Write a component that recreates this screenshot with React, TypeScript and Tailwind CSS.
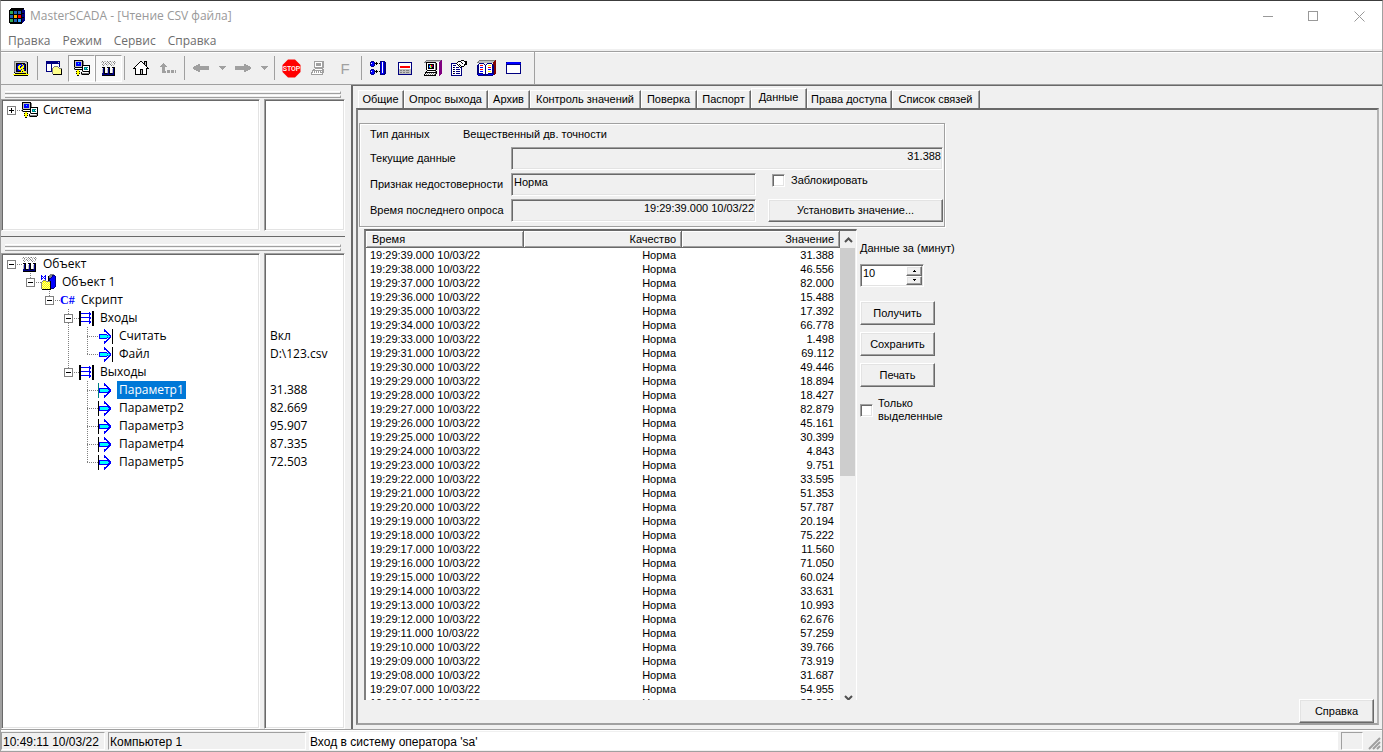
import React, { useState } from "react";

const PALETTE: Record<string, string> = {
  k: "#000000", n: "#000080", b: "#0000ff", g: "#808080", s: "#c0c0c0", w: "#ffffff",
  y: "#ffff00", l: "#ffff8c", c: "#00ffff", t: "#008080", r: "#ff0000", G: "#2fa84f",
  p: "#800080", m: "#800000", a: "#a0a0a0", u: "#1f5fb4", o: "#ffb000", h: "#2aa0ff",
};

function Pix({ rows, w = 16 }: { rows: string[]; w?: number }) {
  const rects: React.ReactNode[] = [];
  rows.forEach((row, y) => {
    let x = 0;
    while (x < row.length) {
      let end = x + 1;
      while (end < row.length && row[end] === row[x]) end++;
      if (PALETTE[row[x]]) {
        rects.push(<rect key={y + "-" + x} x={x} y={y} width={end - x} height={1} fill={PALETTE[row[x]]} />);
      }
      x = end;
    }
  });
  return (
    <svg width={w} height={rows.length} viewBox={`0 0 ${w} ${rows.length}`} shapeRendering="crispEdges" aria-hidden="true" className="block shrink-0">
      {rects}
    </svg>
  );
}

const LOGO = [
  "..kkkkkkkkkkkkk.",
  ".kkkkkkkkkkkkkn.",
  "kkkkkkkkkkkkknnn",
  "kGGGkuuukuuuknnn",
  "kGGGkuuukuuuknnn",
  "kGGGkuuukuuukkkn",
  "kkkkkkkkkkkkknnn",
  "kuuukoookrrrknnn",
  "kuuukoookrrrknnn",
  "kuuukoookrrrkkkn",
  "kkkkkkkkkkkkknnn",
  "kGGGkuuukhhhknnn",
  "kGGGkuuukhhhknnn",
  "kGGGkuuukhhhknn.",
  "kkkkkkkkkkkkkn..",
  ".kkkkkkkkkkkk...",
];

const EXIT = [
  ".ggggggggggggg..",
  ".gsssssssssssgk.",
  ".gskkkkkkkkkssk.",
  ".gsknbbbbynnksk.",
  ".gsknbyybbynksk.",
  ".gskbyynbyynksk.",
  ".gskbyynyyynksk.",
  ".gsknyyyyynnksk.",
  ".gsknbyybyybksk.",
  ".gsknbbbyyynksk.",
  ".gskkkkkykyyssk.",
  ".kssssyyyssyysk.",
  "..kkkkkkkkkkkyk.",
  "yyyyyyyyyyyyyyyy",
  ".kkkkkkkkkkkkkk.",
];

const FOLDER_WIN = [
  "nnnnnnnnnnnnnn..",
  "nnnnnnnnnnnnsn..",
  "nnnnnnnnnnnnnn..",
  "nwwwwnwwwwwwwn..",
  "nwwwwnwwwwwwwn..",
  "nwwwwnwwggggwn..",
  "nwwwwnwgllllg...",
  "nwwwwngllllllggg",
  "nwwwwngllllllllk",
  "nwwwwngllllllllk",
  "nnnnnngllllllllk",
  "......gllllllllk",
  "......gllllllllk",
  ".......kkkkkkkkk",
];

const SYSTEM = [
  "kkkkkkkkk.......",
  "kssssssskg......",
  "ksbbbbbskg......",
  "ksbbcbbskg......",
  "ksbbbbbskg......",
  "ksbbbbbskkkkkkkk",
  "kssssssskwwwwwwk",
  "gkkkkkkkkwttttwk",
  "kwwwwwwwkwtctwwk",
  "gkkkkkkkkwttttwk",
  "...yy...kwwwwwwk",
  "..kyyk..gkkkkkkk",
  "..yyyy.kwwwwwwsk",
  "..kyyk.kgggggggk",
  "...yy..gkkkkkkk.",
  "...kk...........",
];

const FACTORY = [
  ".g.ss.g.sg.s.g..",
  "s.g..s.g..s.g.s.",
  "..s.g.s.g.s..g..",
  ".g.s.g.s.g.s.s..",
  "..g...s...g.s...",
  "................",
  ".kkk..kkk..kkk..",
  "..nk...nk...nk..",
  ".snk..snk..snk..",
  ".snk..snk..snk..",
  ".snk..snk..snk..",
  ".snk..snk..snk..",
  ".nnkkknnkkknnk..",
  ".nnnnnnnnnnnnk..",
  ".kkkkkkkkkkkkk..",
];

const HOME = [
  ".......kk..kkk..",
  "......kwwk.ksk..",
  ".....kwwwwkksk..",
  "....kwwwwwwksk..",
  "...kwwwwwwwwkk..",
  "..kwwwwwwwwwwk..",
  ".kwwwwwwwwwwwwk.",
  "kkkwwwwwwwwwwkkk",
  "..kwwwwkkkwwwk..",
  "..kwwwwkskwwwk..",
  "..kwwwwkskwwwk..",
  "..kwwwwkskwwwk..",
  "..kwwwwkskwwwk..",
  "..kkkkkkkkkkkk..",
];

const UP = [
  "...a............",
  "..aaa...........",
  ".aaaaa..........",
  "aaaaaaa.........",
  "..aaa...........",
  "..aaa...........",
  "..aaa...........",
  "..aaa..aaa.aaa.a",
  "..aaaa.aaa.aaa.a",
  "..aaaa.aaa.aaa.a",
];

const LEFT = [
  ".....aa.........",
  "...aaaa.........",
  ".aaaaaaaaaaaaaaa",
  "aaaaaaaaaaaaaaaa",
  "aaaaaaaaaaaaaaaa",
  ".aaaaaaaaaaaaaaa",
  "...aaaa.........",
  ".....aa.........",
];
const RIGHT = LEFT.map((r) => r.split("").reverse().join(""));
const CARET = ["aaaaaaa", ".aaaaa.", "..aaa..", "...a..."];

const PC_GRAY = [
  "....aaaaaaaaaa..",
  "....awwwwwwwaa..",
  "....awaaaaawaa..",
  "....awaaaaawaa..",
  "....awaaaaawaa..",
  "....awwwwwwwaa..",
  "....aaaaaaaaaa..",
  ".....aaaaaaaa...",
  "...aawwwwwwwaa..",
  "..aaaaaaaaaaaa..",
  "..awawawawawaa..",
  ".aawawawawaaaa..",
  ".awwwwwwwwwwa...",
  ".aaaaaaaaaaaa...",
];

const LINKS = [
  ".nnn......nnnnn.",
  "nbbbn.k...nbwbnn",
  "nwbbnkkk.knbwbnn",
  "nbbbn.k...nbwbnn",
  "nbbbn.....nbwbnn",
  ".nnn......nbwbnn",
  "..........nbwbnn",
  "..........nbwbnn",
  ".nnn......nbwbnn",
  "nbbbn.k...nbwbnn",
  "nwbbnkkk.knbwbnn",
  "nbbbn.k...nbwbnn",
  "nbbbn.....nbbbnn",
  ".nnn......nnnnn.",
];

const DIALOG = [
  "nnnnnnnnnnnnnn",
  "nwwwwwwwwwwwwn",
  "nwwwwwwwwwwwwn",
  "nwwwwwwwwwwwwn",
  "nwrrrrrrrrrrwn",
  "nwrrrrrrrrrrwn",
  "nwwwwwwwwwwwwn",
  "nssssssssssssn",
  "nsggsggsgggssn",
  "nssssssssssssn",
  "nsggsggsgggssn",
  "nssssssssssssn",
  "nnnnnnnnnnnnnn",
];

const PC_COLOR = [
  "...gggggggggggggggp",
  "..gsssssssssssssspp",
  ".ggkkkkkkkkkk.wwppp",
  "...kwwwwwwwwgk.wppp",
  "...kwkkkkkkwgk.wppp",
  "...kwkbyrpkwgk.wppp",
  "...kwkccrpkwgk.wppp",
  "...kwkbyGkkwgk.wppp",
  "...kwkkkkkkwgk.wppp",
  "...kwwwwwwwwgk.wppp",
  "....kkkkkkkkk..wppp",
  "...kwwwwwwwwgk.wppp",
  "..kkkkkkkkkkkk.wppp",
  "..kwgwgwgwgwgk.wppp",
  ".kwgwgwgwgwgk..wpp.",
  ".kkkkkkkkkkkk..wp..",
];

const PROPS = [
  "..........kkk...",
  ".......kkkwwwkkk",
  "......kwwwkwwwkk",
  "nnnnnkwwwwwkwwkk",
  "nwwwwwkwkwwwwkkk",
  "nwnnnwwkwkwwwk..",
  "nwwwwwwwkwkkk...",
  "nwknwnnnwkn.....",
  "nwwwwwwwwwn.....",
  "nwknwnnnnwn.....",
  "nwwwwwwwwwn.....",
  "nwknwnnnnwn.....",
  "nwwwwwwwwwn.....",
  "nwknwnnnnwn.....",
  "nwwwwwwwwwn.....",
  "nnnnnnnnnnn.....",
];

const BOOK = [
  "..ggggggggggggggggm",
  ".gsssssssssssssssmm",
  "ggssssssssssssssmmm",
  "..nnnnn...nnnnn.mmm",
  ".nwwwwwn.nwwwwwnmmm",
  "nnwrrrwwnwwyyywnnmm",
  "nnwwwwwwnwwwwwwnnmm",
  "nnwbbbwwnwwrrrwnnmm",
  "nnwwwwwwnwwwwwwnnmm",
  "nnwrrrwwnwwbbbwnnmm",
  "nnwwwwwwnwwwwwwnnmm",
  "nnwbbbwwnwwyyywnnmm",
  "nnwwwwwwnwwwwwwnnmm",
  "nnnnnnwwnwwnnnnnnmm",
  "nbbbbbnnnnnbbbbbnm.",
  ".nnnnnnnnnnnnnnn...",
];

const WINDOW = [
  "nbbbbbbbbbbbbbn",
  "bbbbbbbbbbbbbbb",
  "nnnnnnnnnnnnnnn",
  "nwwwwwwwwwwwwwn",
  "nwwwwwwwwwwwwwn",
  "nwwwwwwwwwwwwwn",
  "nwwwwwwwwwwwwwn",
  "nwwwwwwwwwwwwwn",
  "nwwwwwwwwwwwwwn",
  "nwwwwwwwwwwwwwn",
  "nwwwwwwwwwwwwwn",
  "nnnnnnnnnnnnnnn",
];

const OBJECT = [
  ".........gggg...",
  "b...b...gggnnn..",
  "bb.bb..kgggnbbn.",
  "b.b.b..kggnbbbn.",
  "bb.bb..knnbbbbn.",
  "b...b..knbbbbbn.",
  "..ggg..knbbbbbn.",
  ".gyyyggggkbbbbn.",
  "glylylylykbbbbn.",
  "gylylylylkbbbbn.",
  "glylylylykbbbbn.",
  "gylylylylkbbbbn.",
  "glylylylykbbbbn.",
  "gylylylylkbbbn..",
  "glylylylyknnn...",
  ".kkkkkkkkk......",
];

const PORTS = [
  "kk...........kk.",
  "kk........b..kk.",
  "kkbbbbbbbbbb.kk.",
  "kk........bb.kk.",
  "kk........b..kk.",
  "kk........b..kk.",
  "kkbbbbbbbbbb.kk.",
  "kk........bb.kk.",
  "kk........b..kk.",
  "kk........b..kk.",
  "kkbbbbbbbbbb.kk.",
  "kk........bb.kk.",
  "kk........b..kk.",
  "kk...........kk.",
  "kk...........kk.",
];

const INPUT = [
  "......b.......k.",
  "......bb......k.",
  "......bbb.....k.",
  "........bb....k.",
  ".........bb...k.",
  ".bbbbbbbb.bb..k.",
  ".bcccccccbcbb.k.",
  ".bccccccccccb.k.",
  ".bcccccccbcbb.k.",
  ".bbbbbbbb.bb..k.",
  ".........bb...k.",
  "........bb....k.",
  "......bbb.....k.",
  "......bb......k.",
  "......b.......k.",
];

const OUTPUT = [
  "k.....b.........",
  "k.....bb........",
  "k.....bbb.......",
  "k.......bb......",
  "k........bb.....",
  "kbbbbbbbbbbb....",
  "kbccccccccbbb...",
  "kbcccccccccbb...",
  "kbccccccccbbb...",
  "kbbbbbbbbbbb....",
  "k........bb.....",
  "k.......bb......",
  "k.....bbb.......",
  "k.....bb........",
  "k.....b.........",
];
const OUTPUT_ACTIVE = OUTPUT.map((r) => "t" + r.slice(1));

type Cell = "blank" | "vert" | "tee" | "end" | "plus" | "minus" | "minusUp" | "minusUpDown";

function Guide({ kind }: { kind: Cell }) {
  const box = kind === "plus" || kind.startsWith("minus");
  const up = kind === "vert" || kind === "tee" || kind === "end" || kind === "minusUp" || kind === "minusUpDown";
  const down = kind === "vert" || kind === "tee" || kind === "minusUpDown";
  return (
    <svg width="19" height="18" viewBox="0 0 19 18" shapeRendering="crispEdges" className="block" aria-hidden="true">
      <g stroke="#808080" strokeWidth="1" strokeDasharray="1 1" fill="none">
        {up && <path d="M8.5 0V9" />}
        {down && <path d="M8.5 10V18" />}
        {kind !== "blank" && kind !== "vert" && <path d="M8 9.5H19" />}
      </g>
      {box && (
        <g fill="none" stroke="#808080">
          <rect x="4.5" y="5.5" width="8" height="8" fill="#ffffff" />
          <path d="M6 9.5H11" stroke="#000000" />
          {kind === "plus" && <path d="M8.5 7V12" stroke="#000000" />}
        </g>
      )}
    </svg>
  );
}

type Node = { cells: Cell[]; icon: React.ReactNode; label: string; value?: string };

const CSHARP = (
  <span className="w-4 font-['Liberation_Serif',serif] text-[12px] font-bold leading-none text-[#0000ff]">C#</span>
);

const OBJECTS: Node[] = [
  { cells: ["minus"], icon: <Pix rows={FACTORY} />, label: "Объект" },
  { cells: ["blank", "minusUp"], icon: <Pix rows={OBJECT} />, label: "Объект 1" },
  { cells: ["blank", "blank", "minusUp"], icon: CSHARP, label: "Скрипт" },
  { cells: ["blank", "blank", "blank", "minusUpDown"], icon: <Pix rows={PORTS} />, label: "Входы" },
  { cells: ["blank", "blank", "blank", "vert", "tee"], icon: <Pix rows={INPUT} />, label: "Считать", value: "Вкл" },
  { cells: ["blank", "blank", "blank", "vert", "end"], icon: <Pix rows={INPUT} />, label: "Файл", value: "D:\\123.csv" },
  { cells: ["blank", "blank", "blank", "minusUp"], icon: <Pix rows={PORTS} />, label: "Выходы" },
  { cells: ["blank", "blank", "blank", "blank", "tee"], icon: <Pix rows={OUTPUT_ACTIVE} />, label: "Параметр1", value: "31.388" },
  { cells: ["blank", "blank", "blank", "blank", "tee"], icon: <Pix rows={OUTPUT} />, label: "Параметр2", value: "82.669" },
  { cells: ["blank", "blank", "blank", "blank", "tee"], icon: <Pix rows={OUTPUT} />, label: "Параметр3", value: "95.907" },
  { cells: ["blank", "blank", "blank", "blank", "tee"], icon: <Pix rows={OUTPUT} />, label: "Параметр4", value: "87.335" },
  { cells: ["blank", "blank", "blank", "blank", "end"], icon: <Pix rows={OUTPUT} />, label: "Параметр5", value: "72.503" },
];

const SYSTEMS: Node[] = [{ cells: ["plus"], icon: <Pix rows={SYSTEM} />, label: "Система" }];

const SUNKEN =
  "border border-t-[#a0a0a0] border-l-[#a0a0a0] border-r-white border-b-white shadow-[inset_1px_1px_0_#696969,inset_-1px_-1px_0_#e3e3e3]";
const RAISED =
  "border border-t-white border-l-white border-r-[#696969] border-b-[#696969] shadow-[inset_-1px_-1px_0_#a0a0a0,inset_1px_1px_0_#e3e3e3] bg-[#f0f0f0]";

function Grip() {
  return (
    <div className="mx-1 flex flex-col gap-px">
      <div className="h-[3px] border-t border-r border-b border-t-white border-r-[#a0a0a0] border-b-[#a0a0a0]" />
      <div className="h-[3px] border-t border-r border-b border-t-white border-r-[#a0a0a0] border-b-[#a0a0a0]" />
    </div>
  );
}

function TreePane({ nodes, selected, onSelect }: { nodes: Node[]; selected: string; onSelect: (s: string) => void }) {
  return (
    <div className="flex min-h-0 flex-1 gap-1 font-['Open_Sans','Noto_Sans',sans-serif] text-[12px] leading-[18px]">
      <ul className={`w-[259px] overflow-hidden bg-white p-px ${SUNKEN}`}>
        {nodes.map((n) => (
          <li key={n.label} className="flex h-[18px] items-center">
            {n.cells.map((c, i) =>
              c === "plus" || c.startsWith("minus") ? (
                <button key={i} type="button" aria-label={n.label}><Guide kind={c} /></button>
              ) : (
                <Guide key={i} kind={c} />
              )
            )}
            {n.icon}
            <button
              type="button"
              onClick={() => onSelect(n.label)}
              className={`ml-[3px] px-[2px] ${selected === n.label ? "bg-[#0078d7] text-white" : "text-black"}`}
            >
              {n.label}
            </button>
          </li>
        ))}
      </ul>
      <ul className={`flex-1 overflow-hidden bg-white py-px pl-[5px] ${SUNKEN}`}>
        {nodes.map((n) => (
          <li key={n.label} className="h-[18px]">{n.value}</li>
        ))}
      </ul>
    </div>
  );
}

function ToolButton({ label, pressed, disabled, children }: { label: string; pressed?: boolean; disabled?: boolean; children: React.ReactNode }) {
  return (
    <button
      type="button"
      aria-label={label}
      disabled={disabled}
      className={`flex h-[27px] w-[27px] items-center justify-center border ${
        pressed ? "border-t-[#a0a0a0] border-l-[#a0a0a0] border-r-white border-b-white bg-[#f8f8f8]" : "border-transparent pr-px"
      }`}
    >
      {children}
    </button>
  );
}

function Sep() {
  return <span className="mr-[3px] ml-[2px] h-[24px] w-px bg-[#a0a0a0]" />;
}

const DATA: [string, string][] = [
  ["39", "31.388"], ["38", "46.556"], ["37", "82.000"], ["36", "15.488"], ["35", "17.392"], ["34", "66.778"],
  ["33", "1.498"], ["31", "69.112"], ["30", "49.446"], ["29", "18.894"], ["28", "18.427"], ["27", "82.879"],
  ["26", "45.161"], ["25", "30.399"], ["24", "4.843"], ["23", "9.751"], ["22", "33.595"], ["21", "51.353"],
  ["20", "57.787"], ["19", "20.194"], ["18", "75.222"], ["17", "11.560"], ["16", "71.050"], ["15", "60.024"],
  ["14", "33.631"], ["13", "10.993"], ["12", "62.676"], ["11", "57.259"], ["10", "39.766"], ["09", "73.919"],
  ["08", "31.687"], ["07", "54.955"], ["06", "35.234"],
];

const TABS: [string, string][] = [
  ["Общие", "w-[46px]"], ["Опрос выхода", "w-[84px]"], ["Архив", "w-[42px]"], ["Контроль значений", "w-[111px]"],
  ["Поверка", "w-[56px]"], ["Паспорт", "w-[54px]"], ["Данные", "w-[56px]"], ["Права доступа", "w-[85px]"], ["Список связей", "w-[88px]"],
];

const CHECK =
  "size-[13px] shrink-0 appearance-none border border-t-[#a0a0a0] border-l-[#a0a0a0] border-r-white border-b-white bg-white shadow-[inset_1px_1px_0_#696969,inset_-1px_-1px_0_#e3e3e3] checked:bg-[#0078d7]";
const FIELD = `h-[23px] bg-[#f0f0f0] pl-[2px] pr-px pb-[6px] outline-none ${SUNKEN}`;
const TH = "border-r border-b border-[#696969] shadow-[inset_1px_1px_0_#ffffff,inset_-1px_-1px_0_#a0a0a0] font-normal";

export default function App() {
  const [selected, setSelected] = useState("Параметр1");
  const [tab, setTab] = useState("Данные");
  const [minutes, setMinutes] = useState(10);

  return (
    <div className="flex h-screen flex-col overflow-hidden border-t border-r border-b border-l border-t-[#3c3c3c] border-r-[#a0a0a0] border-b-[#a0a0a0] border-l-[#a0a0a0] bg-[#f0f0f0] font-['Liberation_Sans',sans-serif] text-[11px] text-black">
      <header className="shrink-0 bg-white font-['Open_Sans','Noto_Sans',sans-serif] text-[12px]">
        <div className="flex h-[30px] items-center pl-2">
          <Pix rows={LOGO} />
          <h1 className="ml-[5px] text-[#999999]">MasterSCADA - [Чтение CSV файла]</h1>
          <div className="ml-auto flex h-full text-[#999999]">
            <button type="button" aria-label="Свернуть" className="flex w-[45px] items-center justify-center">
              <svg width="11" height="11" viewBox="0 0 11 11" stroke="currentColor" shapeRendering="crispEdges"><path d="M0 5.5H10" /></svg>
            </button>
            <button type="button" aria-label="Развернуть" className="flex w-[45px] items-center justify-center">
              <svg width="11" height="11" viewBox="0 0 11 11" stroke="currentColor" fill="none" shapeRendering="crispEdges"><rect x="0.5" y="0.5" width="9" height="9" /></svg>
            </button>
            <button type="button" aria-label="Закрыть" className="flex w-[46px] items-center justify-center">
              <svg width="11" height="11" viewBox="0 0 11 11" stroke="currentColor"><path d="M0.5 0.5L10.5 10.5M10.5 0.5L0.5 10.5" /></svg>
            </button>
          </div>
        </div>
        <nav className="flex h-[18px] items-center gap-3 pt-[2px] pl-[7px] text-[#6d6d6d]">
          {["Правка", "Режим", "Сервис", "Справка"].map((m) => (
            <button key={m} type="button">{m}</button>
          ))}
        </nav>
      </header>

      <div className="mt-[2px] flex h-[34px] shrink-0 items-center border-t border-b border-[#a0a0a0] pl-[7px] shadow-[inset_0_1px_0_#ffffff]">
        <ToolButton label="Выход"><Pix rows={EXIT} /></ToolButton>
        <Sep />
        <ToolButton label="Окно проекта"><Pix rows={FOLDER_WIN} /></ToolButton>
        <ToolButton label="Система" pressed><Pix rows={SYSTEM} /></ToolButton>
        <ToolButton label="Объекты" pressed><Pix rows={FACTORY} /></ToolButton>
        <Sep />
        <ToolButton label="Домой"><Pix rows={HOME} /></ToolButton>
        <ToolButton label="Вверх" disabled><Pix rows={UP} /></ToolButton>
        <Sep />
        <ToolButton label="Назад" disabled><Pix rows={LEFT} /></ToolButton>
        <button type="button" aria-label="История назад" disabled className="flex w-[15px] justify-center"><Pix rows={CARET} w={7} /></button>
        <ToolButton label="Вперёд" disabled><Pix rows={RIGHT} /></ToolButton>
        <button type="button" aria-label="История вперёд" disabled className="flex w-[15px] justify-center"><Pix rows={CARET} w={7} /></button>
        <Sep />
        <ToolButton label="Стоп">
          <svg width="19" height="19" viewBox="0 0 19 19" className="shrink-0">
            <path d="M6 0.5H13L18.5 6V13L13 18.5H6L0.5 13V6Z" fill="#ff0000" />
            <text x="9.5" y="12" textAnchor="middle" fontFamily="Roboto, sans-serif" fontSize="7" fontWeight="500" fill="#ffffff">STOP</text>
          </svg>
        </ToolButton>
        <ToolButton label="Компьютер" disabled><Pix rows={PC_GRAY} /></ToolButton>
        <ToolButton label="Фиксация" disabled><span className="text-[15px] leading-none text-[#a0a0a0]">F</span></ToolButton>
        <Sep />
        <ToolButton label="Связи"><Pix rows={LINKS} /></ToolButton>
        <ToolButton label="Диалог"><Pix rows={DIALOG} w={14} /></ToolButton>
        <ToolButton label="Мнемосхема"><Pix rows={PC_COLOR} w={19} /></ToolButton>
        <ToolButton label="Свойства"><Pix rows={PROPS} /></ToolButton>
        <ToolButton label="Журнал"><Pix rows={BOOK} w={19} /></ToolButton>
        <ToolButton label="Окно"><Pix rows={WINDOW} w={15} /></ToolButton>
        <span className="ml-[7px] h-full w-px bg-[#a0a0a0]" />
      </div>

      <div className="flex min-h-0 flex-1 border-b border-[#a0a0a0]">
        <aside className="flex w-[344px] shrink-0 flex-col">
          <div className="flex h-[152px] shrink-0 flex-col border-b border-[#696969] pt-[6px] pb-[5px]">
            <Grip />
            <div className="h-px" />
            <TreePane nodes={SYSTEMS} selected={selected} onSelect={setSelected} />
          </div>
          <div className="flex min-h-0 flex-1 flex-col pt-[7px]">
            <Grip />
            <div className="h-[2px]" />
            <TreePane nodes={OBJECTS} selected={selected} onSelect={setSelected} />
          </div>
        </aside>

        <main className="ml-[6px] flex min-w-0 flex-1 flex-col border-t border-l-2 border-[#696969] pt-[2px] pr-[3px] pb-[4px] pl-[3px]">
          <div role="tablist" className="flex h-[20px] shrink-0 items-end pl-[2px]">
            {TABS.map(([name, width]) => (
              <button
                key={name}
                type="button"
                role="tab"
                aria-selected={tab === name}
                onClick={() => setTab(name)}
                className={`${width} whitespace-nowrap border-t border-r border-l border-t-white border-r-[#696969] border-l-white pr-px text-center shadow-[inset_-1px_0_0_#a0a0a0] ${
                  tab === name ? "h-[20px] pb-[5px]" : "h-[18px] pb-[3px]"
                }`}
              >
                {name}
              </button>
            ))}
          </div>
          <section className="flex min-h-0 flex-1 flex-col border-2 border-t-[#696969] border-r-[#b4b4b4] border-b-[#a0a0a0] border-l-[#808080]">
            <div className="mt-[13px] ml-px w-[586px] shrink-0 border border-[#a0a0a0] pt-px pr-px pb-1 pl-[10px] shadow-[inset_1px_1px_0_#ffffff,1px_1px_0_#ffffff]">
              <div className="flex h-[18px] items-center">
                <span className="w-[93px]">Тип данных</span>
                <span>Вещественный дв. точности</span>
              </div>
              <div className="grid grid-cols-[141px_245px_1fr] items-center gap-y-[3px] pt-[4px]">
                <label htmlFor="cur" className="whitespace-nowrap">Текущие данные</label>
                <input id="cur" readOnly value="31.388" className={`col-span-2 text-right ${FIELD}`} />
                <label htmlFor="qual" className="whitespace-nowrap">Признак недостоверности</label>
                <input id="qual" readOnly value="Норма" className={FIELD} />
                <div className="flex h-[23px] items-center pb-2 pl-4">
                  <input id="lock" type="checkbox" className={CHECK} />
                  <label htmlFor="lock" className="pl-[6px]">Заблокировать</label>
                </div>
                <label htmlFor="last" className="whitespace-nowrap">Время последнего опроса</label>
                <input id="last" readOnly value="19:29:39.000 10/03/22" className={`text-right ${FIELD}`} />
                <button type="button" className={`ml-3 h-[23px] pb-px ${RAISED}`}>Установить значение...</button>
              </div>
            </div>

            <div className="flex min-h-0 flex-1 pl-[6px]">
              <div className="mt-[2px] mb-[23px] flex w-[493px] overflow-hidden border-t-2 border-r border-l-2 border-t-[#696969] border-r-white border-l-[#808080] bg-white">
                <div className="min-w-0 flex-1 overflow-hidden">
                  <table className="w-full table-fixed border-separate border-spacing-0">
                    <colgroup>
                      <col className="w-[158px]" />
                      <col className="w-[158px]" />
                      <col />
                    </colgroup>
                    <thead>
                      <tr className="h-[17px] bg-[#f0f0f0] leading-[15px]">
                        <th className={`pl-[6px] text-left ${TH}`}>Время</th>
                        <th className={`pr-[5px] text-right ${TH}`}>Качество</th>
                        <th className={`pr-[5px] text-right ${TH}`}>Значение</th>
                      </tr>
                    </thead>
                    <tbody>
                      {DATA.map(([s, v]) => (
                        <tr key={s} className="h-[14px] leading-[14px]">
                          <td className="pl-1">{`19:29:${s}.000 10/03/22`}</td>
                          <td className="pr-[6px] text-right">Норма</td>
                          <td className="pr-[6px] text-right">{v}</td>
                        </tr>
                      ))}
                    </tbody>
                  </table>
                </div>
                <div className="flex w-4 flex-col bg-[#f0f0f0]">
                  <button type="button" aria-label="Вверх" className="flex h-[17px] items-center justify-center">
                    <svg width="9" height="6" viewBox="0 0 9 6" fill="none" stroke="#505050" strokeWidth="2"><path d="M1 5L4.5 1.5L8 5" /></svg>
                  </button>
                  <div className="mr-px h-[228px] bg-[#cdcdcd]" />
                  <button type="button" aria-label="Вниз" className="mt-auto flex h-[5px] justify-center overflow-hidden">
                    <svg width="9" height="6" viewBox="0 0 9 6" fill="none" stroke="#505050" strokeWidth="2"><path d="M1 1L4.5 4.5L8 1" /></svg>
                  </button>
                </div>
              </div>

              <div className="ml-[3px] flex w-[100px] flex-col items-start pt-[13px]">
                <label htmlFor="minutes" className="whitespace-nowrap leading-4">Данные за (минут)</label>
                <div className={`mt-2 flex h-[23px] w-[64px] bg-white p-px ${SUNKEN}`}>
                  <input
                    id="minutes"
                    value={minutes}
                    onChange={(e) => setMinutes(Number(e.target.value) || 0)}
                    className="min-w-0 flex-1 pb-1 pl-px outline-none"
                  />
                  <div className="flex w-4 flex-col">
                    <button type="button" aria-label="Больше" onClick={() => setMinutes(minutes + 1)} className={`flex flex-1 items-center justify-center ${RAISED}`}>
                      <Pix rows={[".k.", "kkk"]} w={3} />
                    </button>
                    <button type="button" aria-label="Меньше" onClick={() => setMinutes(minutes - 1)} className={`flex flex-1 items-center justify-center ${RAISED}`}>
                      <Pix rows={["kkk", ".k."]} w={3} />
                    </button>
                  </div>
                </div>
                <div className="mt-[14px] flex flex-col gap-[7px]">
                  {["Получить", "Сохранить", "Печать"].map((b) => (
                    <button key={b} type="button" className={`h-6 w-[75px] ${RAISED}`}>{b}</button>
                  ))}
                </div>
                <div className="mt-[10px] flex items-center gap-[5px]">
                  <input id="only" type="checkbox" className={CHECK} />
                  <label htmlFor="only" className="leading-[13px]">Только<br />выделенные</label>
                </div>
              </div>

              <button type="button" className={`mr-[3px] ml-auto h-6 w-[75px] self-end ${RAISED}`}>Справка</button>
            </div>
          </section>
        </main>
      </div>

      <footer className="flex h-[21px] shrink-0 gap-[3px] pt-[2px] pb-px text-[12px] leading-[18px] shadow-[inset_0_1px_0_#ffffff]">
        <span className="w-[104px] whitespace-nowrap border border-t-[#a0a0a0] border-l-[#a0a0a0] border-r-white border-b-white pl-px">10:49:11 10/03/22</span>
        <span className="w-[198px] border border-t-[#a0a0a0] border-l-[#a0a0a0] border-r-white border-b-white pl-px">Компьютер 1</span>
        <span className="flex-1 bg-white pt-px pl-px">Вход в систему оператора 'sa'</span>
        <span className="w-[22px] border border-t-[#a0a0a0] border-l-[#a0a0a0] border-r-white border-b-white" />
        <svg width="16" height="14" viewBox="0 0 16 14" stroke="#a0a0a0" strokeWidth="2" className="self-end" aria-hidden="true">
          <path d="M3 13L14 2M7 13L14 6M11 13L14 10" />
        </svg>
      </footer>
    </div>
  );
}
